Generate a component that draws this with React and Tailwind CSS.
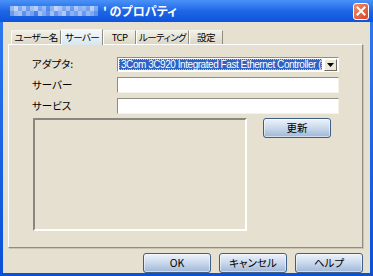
const mosaic = [
  ["bg-white/50", "bg-white/70", "bg-white/40", "bg-white/60", "bg-white/30", "bg-white/55", "bg-white/65", "bg-white/35", "bg-white/50", "bg-white/20", "bg-white/45", "bg-white/70", "bg-white/60", "bg-white/40", "bg-white/55", "bg-white/30", "bg-white/60", "bg-white/45", "bg-white/50", "bg-white/35", "bg-white/65", "bg-white/40"],
  ["bg-white/35", "bg-white/55", "bg-white/60", "bg-white/30", "bg-white/50", "bg-white/40", "bg-white/20", "bg-white/60", "bg-white/45", "bg-white/30", "bg-white/60", "bg-white/35", "bg-white/50", "bg-white/65", "bg-white/30", "bg-white/50", "bg-white/40", "bg-white/60", "bg-white/35", "bg-white/55", "bg-white/45", "bg-white/30"],
];

const tabs = ["ユーザー名", "サーバー", "TCP", "ルーティング", "設定"];
const tabWidths = ["w-[50px]", "w-[42px]", "w-[33px]", "w-[53px]", "w-[34px]"];

function XpButton({ children, className = "" }) {
  return (
    <button
      type="button"
      className={`flex items-center justify-center whitespace-nowrap rounded-[3px] border border-[#3d5f86] bg-gradient-to-b from-[#eef3fa] via-[#c9d8ec] to-[#9fb7d7] text-[10.5px] leading-none text-black shadow-[inset_0_0_0_1px_rgba(255,255,255,0.5)] ${className}`}
    >
      {children}
    </button>
  );
}

export default function App() {
  const jp = {
    fontFamily: '"Noto Sans CJK JP", "Liberation Sans", sans-serif',
    fontFeatureSettings: '"palt"',
  };

  return (
    <div
      className="w-[373px] h-[276px] flex flex-col bg-gradient-to-b from-[#2f7af0] to-[#0a50d8] overflow-hidden"
      style={jp}
    >
      {/* title bar */}
      <div className="h-[22px] flex items-center bg-gradient-to-b from-[#4a92f7] via-[#1f66e6] to-[#0b54dc] pl-[10px] pr-[4px]">
        <div className="flex flex-col w-[88px]">
          {mosaic.map((row, i) => (
            <div key={i} className="flex h-[5px]">
              {row.map((c, j) => (
                <span key={j} className={`w-[4px] h-[5px] ${c}`} />
              ))}
            </div>
          ))}
        </div>
        <span className="ml-[5px] text-[12px] font-bold text-white leading-none whitespace-nowrap">' のプロパティ</span>
        <div className="ml-auto w-[16px] h-[17px] rounded-[3px] border border-white bg-gradient-to-br from-[#f08a6c] to-[#d8421c] flex items-center justify-center">
          <svg width="10" height="10" viewBox="0 0 10 10">
            <path d="M1.5 1.5 L8.5 8.5 M8.5 1.5 L1.5 8.5" stroke="white" strokeWidth="2" strokeLinecap="square" />
          </svg>
        </div>
      </div>

      {/* body */}
      <div className="flex-1 mx-[3px] mb-[3px] bg-[#e5e0d0] flex flex-col pl-[5px] pr-[7px]">
        {/* tabs */}
        <div className="flex items-end h-[22px] pl-[3px]">
          {tabs.map((t, i) => {
            const active = i === 1;
            return (
              <div
                key={t}
                className={`${tabWidths[i]} flex items-center justify-center whitespace-nowrap border-t border-l border-r border-t-[#f6f4ee] border-l-[#ffffff] border-r-[#8f8c84] text-[9.5px] tracking-[-0.6px] leading-none text-black ${
                  active
                    ? "h-[16px] bg-gradient-to-b from-[#f4f8fb] to-[#d8e6ef] relative top-px z-10"
                    : "h-[14px] bg-gradient-to-b from-[#f2efe6] to-[#dcd7c6]"
                }`}
              >
                {t}
              </div>
            );
          })}
        </div>

        {/* panel */}
        <div className="h-[204px] border border-t-white border-l-white border-r-[#8f8c84] border-b-[#8f8c84] shadow-[1px_1px_0_#c9c4b4] pl-[23px] pt-[12px] flex flex-col">
          <div className="flex items-center h-[15px]">
            <span className="w-[85px] text-[10.5px] leading-none whitespace-nowrap">アダプタ:</span>
            <div className="w-[222px] h-[15px] bg-white border border-t-[#8f8c84] border-l-[#8f8c84] border-r-white border-b-white flex items-center p-px">
              <div
                className="flex-1 min-w-0 h-full bg-[#2d63c6] text-white text-[10px] leading-none flex items-center pl-[2px] overflow-hidden whitespace-nowrap outline outline-1 outline-dotted outline-[#d8c070] -outline-offset-1"
                style={{ fontFamily: '"Liberation Sans", sans-serif', letterSpacing: "-0.45px" }}
              >
                3Com 3C920 Integrated Fast Ethernet Controller (
              </div>
              <div className="w-[13px] h-[12px] ml-[2px] shrink-0 bg-[#ece9d8] border border-t-white border-l-white border-r-[#6e6b62] border-b-[#6e6b62] flex items-center justify-center">
                <svg width="7" height="4" viewBox="0 0 7 4">
                  <path d="M0 0 H7 L3.5 4 Z" fill="black" />
                </svg>
              </div>
            </div>
          </div>

          <div className="flex items-center h-[16px] mt-[5px]">
            <span className="w-[85px] text-[10.5px] leading-none whitespace-nowrap">サーバー</span>
            <div className="w-[222px] h-[16px] bg-white border border-t-[#8f8c84] border-l-[#8f8c84] border-r-[#f4f2ea] border-b-[#f4f2ea]" />
          </div>

          <div className="flex items-center h-[16px] mt-[5px]">
            <span className="w-[85px] text-[10.5px] leading-none whitespace-nowrap">サービス</span>
            <div className="w-[222px] h-[16px] bg-white border border-t-[#8f8c84] border-l-[#8f8c84] border-r-[#f4f2ea] border-b-[#f4f2ea]" />
          </div>

          <div className="flex items-start mt-[4px]">
            <div className="ml-px w-[214px] h-[113px] border-2 border-t-[#8a877e] border-l-[#8a877e] border-r-white border-b-white" />
            <XpButton className="ml-[16px] w-[68px] h-[20px]">更新</XpButton>
          </div>
        </div>

        {/* bottom buttons */}
        <div className="flex justify-end gap-[8px] mt-[5px]">
          <XpButton className="w-[68px] h-[20px]">OK</XpButton>
          <XpButton className="w-[68px] h-[20px]">キャンセル</XpButton>
          <XpButton className="w-[68px] h-[20px]">ヘルプ</XpButton>
        </div>
      </div>
    </div>
  );
}
